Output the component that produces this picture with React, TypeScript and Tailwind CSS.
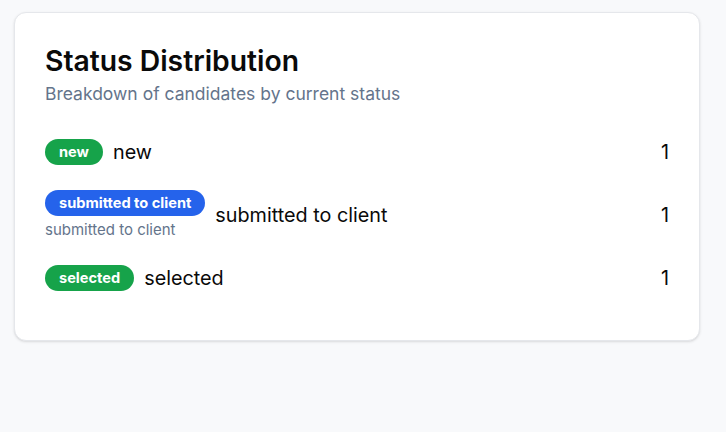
const rows = [
  { status: "new", color: "bg-[#16a34a]", sub: null },
  { status: "submitted to client", color: "bg-[#2563eb]", sub: "submitted to client" },
  { status: "selected", color: "bg-[#16a34a]", sub: null },
];

const StatusDistribution = () => {
  return (
    <div className="rounded-xl border border-[#e5e7eb] bg-white shadow-sm w-[686px] px-[30px] pt-[30px] pb-[48px]">
      <h2 className="text-[28.3px] leading-[36px] font-semibold text-[#0a0a0a]">Status Distribution</h2>
      <p className="text-[17.5px] leading-[24px] text-[#64748b] mt-[3px]">Breakdown of candidates by current status</p>
      <div className="mt-[32px] flex flex-col gap-6">
        {rows.map((r) => (
          <div key={r.status} className="flex items-center justify-between">
            <div className="flex items-center gap-[10px]">
              <div className="flex flex-col">
                <span className={`${r.color} text-white text-[14.6px] leading-[18px] font-bold rounded-full px-[14px] py-1 w-fit`}>
                  {r.status}
                </span>
                {r.sub && <span className="text-[15px] leading-5 text-[#64748b] mt-[4px]">{r.sub}</span>}
              </div>
              <span className="text-[19.8px] leading-7 text-[#0a0a0a]">{r.status}</span>
            </div>
            <span className="text-[19.8px] leading-7 text-[#0a0a0a]">1</span>
          </div>
        ))}
      </div>
    </div>
  );
};

export default function App() {
  return (
    <div className="min-h-[432px] bg-[#f8f9fb] p-[14px] pt-[12px]" style={{ fontFamily: "Inter, sans-serif" }}>
      <StatusDistribution />
    </div>
  );
}
